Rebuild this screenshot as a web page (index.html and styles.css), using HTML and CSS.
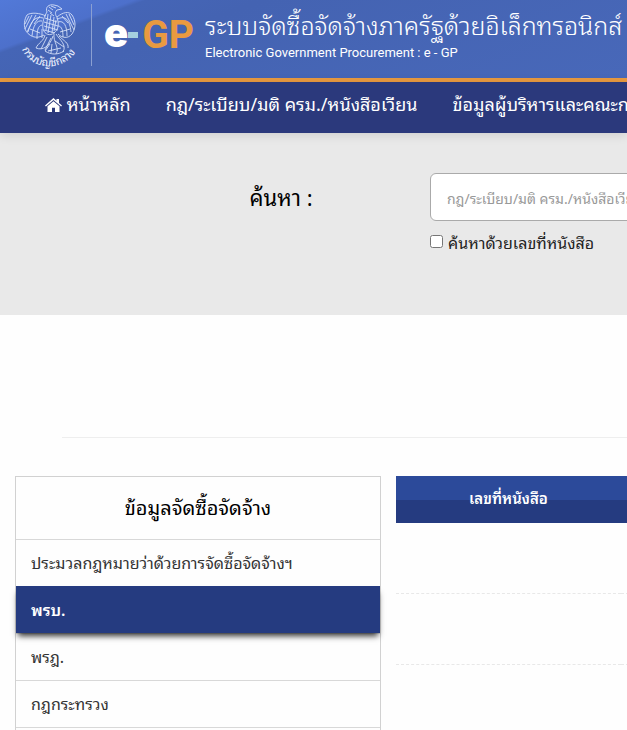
FILE: index.html
```html
<!DOCTYPE html>
<html lang="th">
<head>
    <meta charset="UTF-8">
    <meta name="viewport" content="width=device-width, initial-scale=1.0">
    <title>ระบบจัดซื้อจัดจ้างภาครัฐ</title>
    <link rel="stylesheet" href="styles.css">
</head>
<body>
    <header class="header">
        <svg class="emblem" viewBox="0 0 60 70" aria-hidden="true">
            <g class="bird">
                <path d="M27 12 C25 7 29 4 34 5 L38 6 L42 9 L37 10 C34 13 36 16 38 19"/>
                <path d="M29 7 L33 10 M31 6 L36 8 M28 10 L32 13 M30 13 L34 16"/>
                <path d="M27 12 C24 17 22 22 23 29 C25 35 30 36 34 33 C39 29 39 23 37 18"/>
                <path d="M28 14 L26 30 M31 15 L28 33 M34 17 L32 33 M36 20 L34 31"/>
                <path d="M25 18 L37 22 M24 22 L38 26 M24 26 L38 30 M24 30 L35 33"/>
                <path d="M26 16 C20 13 11 12 7 15 C4 20 4 25 5 29 C8 36 16 40 24 35"/>
                <path d="M23 18 C16 16 11 20 8 32 M22 21 C17 20 13 25 12 36 M22 25 C18 26 17 30 17 39 M22 29 L22 38"/>
                <path d="M9 16 L5 24 M12 15 L5 29 M16 15 L7 32 M20 16 L14 24 M10 29 L20 33"/>
                <path d="M37 17 C43 12 49 11 52 15 C56 21 56 28 52 34 C48 39 42 38 38 34"/>
                <path d="M38 19 C45 15 50 20 51 32 M38 22 C44 20 47 26 47 36 M38 26 C42 26 43 31 43 37"/>
                <path d="M49 14 L54 25 M46 14 L54 30 M42 16 L48 23 M40 32 L50 29"/>
                <path d="M25 35 C24 41 18 43 16 48 C23 51 30 46 33 36 M27 37 L21 49 M31 38 L25 50"/>
                <path d="M34 34 C33 42 40 48 36 54 M36 34 C40 40 47 45 43 52 M39 36 C44 41 49 43 48 48"/>
                <path d="M30 44 L25 51 C31 55 38 55 44 51 M32 44 L31 53 M28 51 L41 48 M35 41 L44 47"/>
            </g>
            <path id="ring" class="ring" d="M2 49 C12 73 49 73 61 43"/>
            <text class="emblem-text"><textPath href="#ring">กรมบัญชีกลาง</textPath></text>
        </svg>
        <div class="brand">
            <span class="brand-e">e</span>
            <span class="brand-dash"></span>
            <span class="brand-gp">GP</span>
        </div>
        <div class="titles">
            <h1>ระบบจัดซื้อจัดจ้างภาครัฐด้วยอิเล็กทรอนิกส์</h1>
            <p>Electronic Government Procurement : e - GP</p>
        </div>
    </header>

    <nav class="nav">
        <a href="#">
            <svg class="home-icon" viewBox="0 0 17 14" aria-hidden="true">
                <path d="M0 7.4 8.5 0 11.5 2.7V1H14v3.9l3 2.5-.9 1-7.6-6.3L.9 8.4Z"/>
                <path d="M2.5 8.2 8.5 3.2l6 5V14H10V9.7H7V14H2.5Z"/>
            </svg>
            หน้าหลัก
        </a>
        <a href="#">กฎ/ระเบียบ/มติ ครม./หนังสือเวียน</a>
        <a href="#">ข้อมูลผู้บริหารและคณะกรรมการ</a>
    </nav>

    <form class="search">
        <label class="search-label" for="keyword">ค้นหา :</label>
        <div class="search-fields">
            <input class="search-input" type="text" id="keyword" placeholder="กฎ/ระเบียบ/มติ ครม./หนังสือเวียน">
            <label class="search-check">
                <input type="checkbox">
                ค้นหาด้วยเลขที่หนังสือ
            </label>
        </div>
    </form>

    <hr class="divider">

    <main class="content">
        <aside class="side">
            <h2>ข้อมูลจัดซื้อจัดจ้าง</h2>
            <a href="#">ประมวลกฎหมายว่าด้วยการจัดซื้อจัดจ้างฯ</a>
            <a href="#" class="active">พรบ.</a>
            <a href="#">พรฎ.</a>
            <a href="#">กฎกระทรวง</a>
            <a href="#"></a>
        </aside>
        <div class="results-wrap">
            <table class="results">
                <thead>
                    <tr><th class="col-number">เลขที่หนังสือ</th><th></th></tr>
                </thead>
                <tbody>
                    <tr><td></td><td></td></tr>
                    <tr><td></td><td></td></tr>
                    <tr><td></td><td></td></tr>
                </tbody>
            </table>
        </div>
    </main>
</body>
</html>
```
FILE: styles.css
```css
* {
    box-sizing: border-box;
}
body {
    margin: 0;
    height: 100vh;
    overflow: hidden;
    background: #fefefe;
    color: #333;
    font-family: "Noto Sans Thai Looped", Loma, Waree, "Noto Sans", sans-serif;
    font-size: 16px;
}
a {
    color: inherit;
    text-decoration: none;
}
.header {
    display: flex;
    height: 82px;
    padding-left: 20px;
    border-bottom: 4px solid #e99a40;
    background: linear-gradient(160deg, #5279d8 0, #4d70cb 46px, #4565b6 50px, #4463b2 90px, #4868b9 100%);
    color: #fff;
    white-space: nowrap;
}
.emblem {
    flex: none;
    width: 60px;
    height: 70px;
    overflow: visible;
}
.bird {
    fill: none;
    stroke: #d5e0f7;
    stroke-width: 0.9;
}
.ring {
    fill: none;
}
.emblem-text {
    fill: #eef3ff;
    font-size: 11px;
}
.brand {
    display: flex;
    align-items: center;
    flex: none;
    width: 114px;
    height: 62px;
    margin: 4px 0 0 11px;
    padding-left: 12px;
    border-left: 1px solid #8ba0d2;
    font-family: Inter, sans-serif;
    font-weight: 900;
}
.brand-e {
    padding-bottom: 4px;
    font-size: 40px;
    line-height: 60px;
}
.brand-dash {
    width: 10px;
    height: 6px;
    margin-right: 4px;
    background: #a5d0df;
}
.brand-gp {
    color: #e99a40;
    font-family: Roboto, sans-serif;
    font-size: 39px;
    font-weight: bold;
}
.titles h1 {
    margin: 6px 0 0;
    font-size: 25px;
    font-weight: 300;
    line-height: 36px;
}
.titles p {
    margin: 3px 0 0;
    font-family: Roboto, sans-serif;
    font-size: 13px;
    line-height: 16px;
}
.nav {
    display: flex;
    gap: 35px;
    height: 51px;
    padding-left: 45px;
    background: #2b397c;
    box-shadow: 0 2px 10px rgba(0, 0, 0, 0.12);
    position: relative;
    color: #fff;
    font-size: 18px;
    line-height: 42px;
    white-space: nowrap;
}
.home-icon {
    width: 17px;
    height: 14px;
    fill: #fff;
    vertical-align: -1px;
}
.search {
    display: flex;
    height: 182px;
    padding-top: 40px;
    background: #e9e9e9;
}
.search-label {
    flex: none;
    width: 430px;
    padding-left: 132px;
    color: #000;
    font-size: 22px;
    line-height: 46px;
    text-align: center;
}
.search-fields {
    flex: 1 0 400px;
}
.search-input {
    display: block;
    width: 100%;
    height: 48px;
    padding: 0 16px;
    border: 1px solid #aaa;
    border-radius: 6px;
    background: #fff;
    font-family: inherit;
    font-size: 14px;
}
.search-input::placeholder {
    color: #999;
}
.search-check {
    display: flex;
    align-items: center;
    gap: 5px;
    height: 41px;
    color: #222;
}
.search-check input {
    width: 13px;
    height: 13px;
    margin: 0;
}
.divider {
    margin: 122px 0 38px 62px;
    border: 0;
    border-top: 1px solid #eee;
}
.content {
    display: flex;
    align-items: flex-start;
    gap: 15px;
    padding-left: 15px;
}
.side {
    flex: none;
    width: 366px;
    border: 1px solid #d1d1d1;
}
.side h2 {
    margin: 0;
    height: 62px;
    color: #000;
    font-size: 20px;
    font-weight: normal;
    line-height: 58px;
    text-align: center;
}
.side a {
    display: block;
    height: 47px;
    padding: 0 15px;
    border-top: 1px solid #d8d8d8;
    line-height: 45px;
}
.side .active {
    position: relative;
    border-color: #253b80;
    background: #253b80;
    box-shadow: 0 5px 6px -2px #333;
    color: #fff;
    font-weight: 600;
}
.results-wrap {
    flex: 1 0 450px;
}
.results {
    width: 100%;
    border-spacing: 0;
    table-layout: fixed;
}
.results th {
    height: 47px;
    padding: 0 0 6px;
    background: linear-gradient(#2c4a9a 24px, #253b80 24px);
    color: #fff;
    font-size: 15px;
    font-weight: 600;
}
.results .col-number {
    width: 225px;
}
.results td {
    height: 71px;
    padding: 0;
    border-bottom: 1px dashed #e8e8e8;
}
```
